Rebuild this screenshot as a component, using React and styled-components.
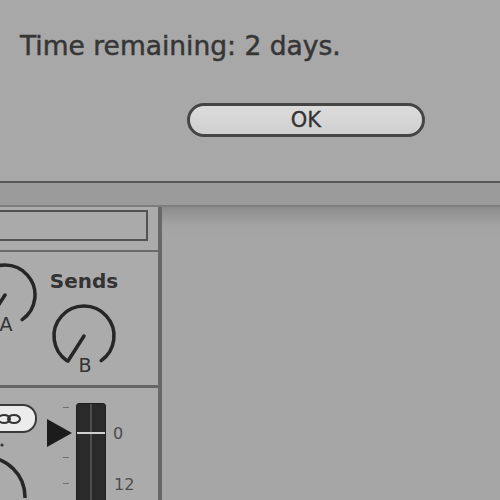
import React from 'react'
import styled, { createGlobalStyle } from 'styled-components'

const GlobalStyle = createGlobalStyle`
  html, body {
    margin: 0;
    padding: 0;
    background: #a6a6a6;
  }
  body {
    font-family: "DejaVu Sans", "Liberation Sans", sans-serif;
  }
`

const Page = styled.div`
  width: 500px;
  height: 500px;
  overflow: hidden;
  display: flex;
  flex-direction: column;
  background: #a6a6a6;
`

const Dialog = styled.div`
  height: 183px;
  flex-shrink: 0;
  box-sizing: border-box;
  background: #a8a8a8;
  border-bottom: 2px solid #575757;
  display: flex;
  flex-direction: column;
  padding: 31px 0 0 20px;
`

const Message = styled.div`
  font-size: 26.5px;
  line-height: 29px;
  color: #363636;
  -webkit-text-stroke: 0.5px #363636;
`

const ButtonRow = styled.div`
  display: flex;
  padding-left: 167px;
  margin-top: 43px;
`

const OkButton = styled.button`
  width: 238px;
  height: 34px;
  box-sizing: border-box;
  border: 3px solid #454545;
  border-radius: 17px;
  background: linear-gradient(#dcdcdc, #cfcfcf);
  font-family: "DejaVu Sans", sans-serif;
  font-size: 21px;
  color: #333;
  -webkit-text-stroke: 0.3px #333;
  padding: 0;
  line-height: 26px;
`

const Toolbar = styled.div`
  height: 24px;
  flex-shrink: 0;
  box-sizing: border-box;
  background: #9b9b9b;
  border-bottom: 2px solid #7e7e7e;
`

const Body = styled.div`
  flex: 1;
  display: flex;
  min-height: 0;
`

const LeftPanel = styled.div`
  width: 158px;
  flex-shrink: 0;
  background: #ababab;
  border-right: 4px solid #686868;
  display: flex;
  flex-direction: column;
  overflow: hidden;
`

const RightArea = styled.div`
  flex: 1;
  background: linear-gradient(#8c8c8c 0px, #a3a3a3 18px, #a6a6a6 30px);
`

const NameSection = styled.div`
  height: 45px;
  flex-shrink: 0;
  box-sizing: border-box;
  padding-top: 3px;
  border-bottom: 2px solid #6a6a6a;
`

const NameBox = styled.div`
  width: 170px;
  height: 31px;
  margin-left: -22px;
  box-sizing: border-box;
  border: 2px solid #525252;
  background: #aaaaaa;
`

const SendsSection = styled.div`
  height: 136px;
  flex-shrink: 0;
  box-sizing: border-box;
  border-bottom: 3px solid #666;
  display: flex;
  align-items: flex-start;
`

const KnobSlot = styled.div`
  margin-left: ${p => p.$left || 0}px;
  margin-top: ${p => p.$top || 0}px;
  flex-shrink: 0;
  line-height: 0;
`

const SendsCol = styled.div`
  display: flex;
  flex-direction: column;
  align-items: center;
  width: 70px;
  margin-left: 9px;
  padding-top: 17px;
`

const SendsLabel = styled.div`
  font-size: 20px;
  font-weight: bold;
  line-height: 24px;
  color: #333;
  margin-bottom: 10px;
`

const MixerSection = styled.div`
  flex: 1;
  display: flex;
  align-items: flex-start;
`

const LeftCol = styled.div`
  width: 57px;
  margin-left: -20px;
  flex-shrink: 0;
  display: flex;
  flex-direction: column;
  padding-top: 16px;
`

const LinkPill = styled.div`
  width: 57px;
  height: 29px;
  box-sizing: border-box;
  border: 2px solid #3a3a3a;
  border-radius: 14px;
  background: #ececec;
  display: flex;
  align-items: center;
  justify-content: center;
`

const Scale = styled.div`
  position: relative;
  width: 30px;
  height: 111px;
  margin-left: 9px;
  flex-shrink: 0;
`

const Tick = styled.div`
  position: absolute;
  left: 17px;
  top: ${p => p.$y}px;
  width: 6px;
  height: 1px;
  background: #6e6e6e;
`

const Pointer = styled.div`
  position: absolute;
  left: 1px;
  top: 31px;
  width: 0;
  height: 0;
  border-top: 14px solid transparent;
  border-bottom: 14px solid transparent;
  border-left: 25px solid #1c1c1c;
`

const Meter = styled.div`
  position: relative;
  width: 30px;
  height: 120px;
  margin-top: 15px;
  flex-shrink: 0;
  box-sizing: border-box;
  background: #2a2a2a;
  border: 1px solid #1e1e1e;
  border-radius: 3px 3px 0 0;
  display: flex;
  justify-content: center;
`

const MeterCore = styled.div`
  width: 2px;
  background: #4e4e4e;
`

const PeakLine = styled.div`
  position: absolute;
  left: 0;
  right: 0;
  top: 28px;
  height: 2px;
  background: #cfcfcf;
`

const Labels = styled.div`
  position: relative;
  width: 40px;
  margin-left: 7px;
  height: 111px;
`

const Label = styled.span`
  position: absolute;
  left: ${p => p.$x}px;
  top: ${p => p.$y}px;
  font-size: 16px;
  line-height: 18px;
  color: #4c4c4c;
`

const Knob = ({ label }) => (
  <svg width="70" height="76" viewBox="0 0 70 76">
    <path
      d="M 17.8 57.6 A 30 30 0 1 1 52.2 57.6"
      fill="none"
      stroke="#262626"
      strokeWidth="3.5"
      strokeLinecap="round"
    />
    <line x1="35" y1="33" x2="19" y2="58" stroke="#262626" strokeWidth="3.5" strokeLinecap="round" />
    <text
      x="36"
      y="69"
      textAnchor="middle"
      fontSize="19"
      fill="#333"
      fontFamily="DejaVu Sans, sans-serif"
    >
      {label}
    </text>
  </svg>
)

const App = () => {
  return (
    <Page>
      <GlobalStyle />
      <Dialog>
        <Message>Time remaining: 2 days.</Message>
        <ButtonRow>
          <OkButton>OK</OkButton>
        </ButtonRow>
      </Dialog>
      <Toolbar />
      <Body>
        <LeftPanel>
          <NameSection>
            <NameBox />
          </NameSection>
          <SendsSection>
            <KnobSlot $left={-30} $top={10}>
              <Knob label="A" />
            </KnobSlot>
            <SendsCol>
              <SendsLabel>Sends</SendsLabel>
              <Knob label="B" />
            </SendsCol>
          </SendsSection>
          <MixerSection>
            <LeftCol>
              <LinkPill>
                <svg width="26" height="12" viewBox="0 0 26 12">
                  <ellipse cx="8" cy="6" rx="6" ry="4" fill="none" stroke="#333" strokeWidth="2" />
                  <ellipse cx="18" cy="6" rx="6" ry="4" fill="none" stroke="#333" strokeWidth="2" />
                </svg>
              </LinkPill>
              <KnobSlot $top={5}>
                <svg width="57" height="60" viewBox="0 0 57 60">
                  <circle cx="22" cy="7" r="1.6" fill="#333" />
                  <circle cx="5" cy="59" r="40" fill="none" stroke="#262626" strokeWidth="3.5" />
                </svg>
              </KnobSlot>
            </LeftCol>
            <Scale>
              <Tick $y={19} />
              <Pointer />
              <Tick $y={69} />
              <Tick $y={95} />
            </Scale>
            <Meter>
              <MeterCore />
              <PeakLine />
            </Meter>
            <Labels>
              <Label $x={0} $y={37}>0</Label>
              <Label $x={1} $y={88}>12</Label>
            </Labels>
          </MixerSection>
        </LeftPanel>
        <RightArea />
      </Body>
    </Page>
  )
}

export default App
